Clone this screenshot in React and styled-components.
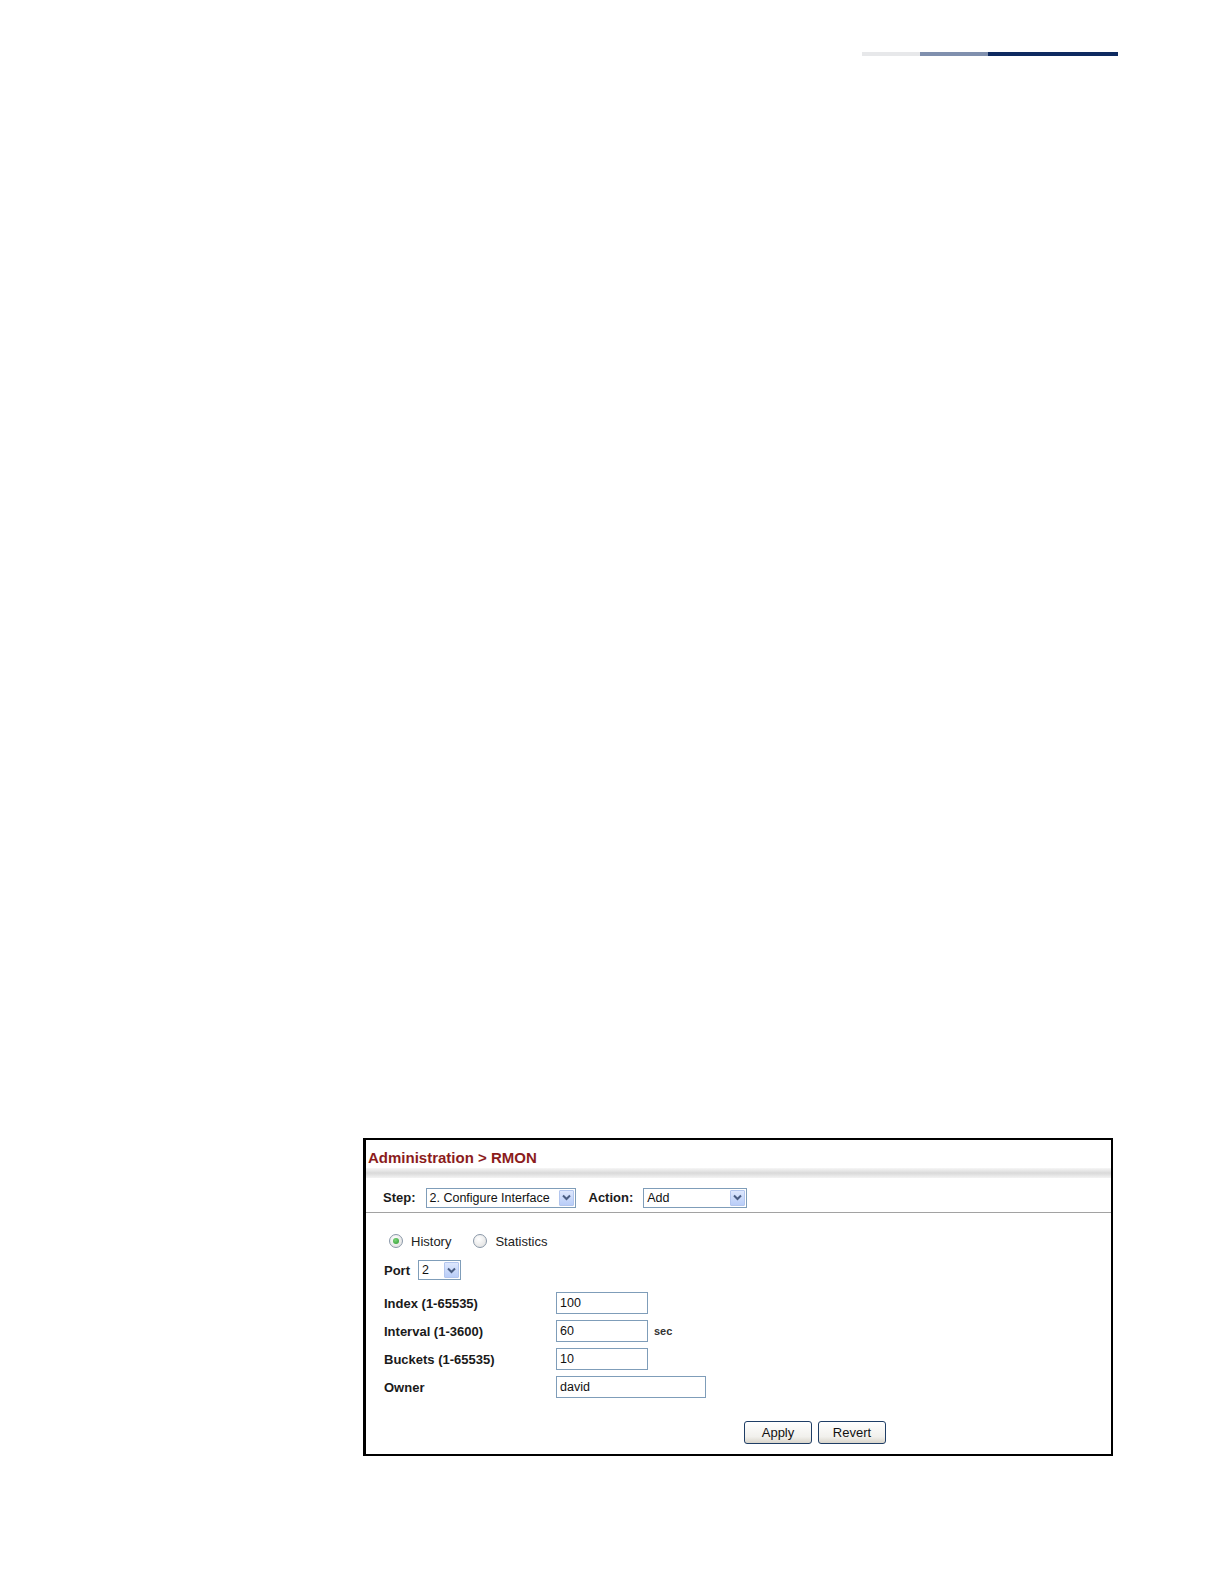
import React from "react"
import styled, { createGlobalStyle } from "styled-components"

const GlobalStyle = createGlobalStyle`
  html, body {
    margin: 0;
    padding: 0;
    background: #fff;
  }
  body {
    font-family: "Liberation Sans", Arial, sans-serif;
  }
`

const Page = styled.div`
  width: 1224px;
  height: 1584px;
  display: flex;
  flex-direction: column;
  overflow: hidden;
`

const TopRule = styled.div`
  display: flex;
  margin: 52px 0 0 862px;
  height: 4px;
`

const RuleSegment = styled.div`
  width: ${p => p.w}px;
  background: ${p => p.color};
`

const Frame = styled.div`
  box-sizing: border-box;
  margin: 1082px 0 0 363px;
  width: 750px;
  height: 318px;
  border: 2px solid #000;
  border-left-width: 3px;
  display: flex;
  flex-direction: column;
`

const Title = styled.h1`
  box-sizing: border-box;
  margin: 0;
  height: 28px;
  padding: 10px 0 0 2px;
  font-size: 15px;
  line-height: 16px;
  font-weight: 700;
  color: #8b1c1c;
`

const Band = styled.div`
  height: 10px;
  background: linear-gradient(#f6f6f6, #d9d9d9 50%, #f3f3f3);
`

const StepBar = styled.div`
  display: flex;
  align-items: center;
  height: 35px;
  padding: 5px 0 0 17px;
  box-sizing: border-box;
  border-bottom: 1px solid #a2a2a2;
`

const BarLabel = styled.span`
  font-size: 13px;
  font-weight: 700;
  color: #1a1a1a;
  margin-right: ${p => p.gap || 10}px;
`

const SelectBox = styled.div`
  box-sizing: border-box;
  display: flex;
  align-items: center;
  justify-content: space-between;
  width: ${p => p.w}px;
  height: 20px;
  border: 1px solid #7f9db9;
  background: #fff;
  padding-left: 3px;
  margin-right: ${p => p.mr || 0}px;
  font-size: 12.5px;
  color: #111;
  white-space: nowrap;
`

const ArrowButton = styled.span`
  box-sizing: border-box;
  display: flex;
  align-items: center;
  justify-content: center;
  width: 15px;
  height: 16px;
  margin-right: 1px;
  border: 1px solid #b3c6ee;
  border-radius: 1px;
  background: linear-gradient(#dde7fd, #b9cdf8);
`

const Content = styled.div`
  display: flex;
  flex-direction: column;
  padding: 20px 0 0 18px;
`

const RadioRow = styled.div`
  display: flex;
  align-items: center;
  height: 16px;
  padding-left: 5px;
  gap: 6px;
`

const RadioCircle = styled.span`
  box-sizing: border-box;
  display: inline-flex;
  align-items: center;
  justify-content: center;
  width: 14px;
  height: 14px;
  border-radius: 50%;
  border: 1px solid #8a98a8;
  background: radial-gradient(circle at 40% 35%, #ffffff, #dcdcdc);
  margin-right: 2px;
`

const RadioDot = styled.span`
  width: 6px;
  height: 6px;
  border-radius: 50%;
  background: radial-gradient(circle at 40% 35%, #7ad47a, #2e9a2e);
`

const RadioText = styled.span`
  font-size: 13px;
  color: #222;
  margin-right: ${p => p.mr || 0}px;
`

const PortRow = styled.div`
  display: flex;
  align-items: center;
  margin-top: 11px;
  height: 20px;
`

const FieldList = styled.div`
  display: flex;
  flex-direction: column;
  gap: 6px;
  margin-top: 12px;
`

const FieldRow = styled.div`
  display: flex;
  align-items: center;
  height: 22px;
`

const FieldLabel = styled.span`
  width: 172px;
  font-size: 13px;
  font-weight: 700;
  color: #1a1a1a;
`

const TextInput = styled.div`
  box-sizing: border-box;
  width: ${p => p.w || 92}px;
  height: 22px;
  border: 1px solid #7f9db9;
  padding: 0 3px;
  font-size: 12.5px;
  line-height: 20px;
  color: #111;
`

const Unit = styled.span`
  margin-left: 6px;
  font-size: 11px;
  font-weight: 700;
  color: #333;
`

const ButtonRow = styled.div`
  display: flex;
  gap: 6px;
  margin: 23px 0 0 360px;
`

const Button = styled.button`
  box-sizing: border-box;
  width: 68px;
  height: 23px;
  border: 1px solid #1f3e66;
  border-radius: 3px;
  background: linear-gradient(#ffffff, #f1f0ec 70%, #d9d5cb);
  font-family: "Liberation Sans", Arial, sans-serif;
  font-size: 13px;
  color: #111;
  padding: 0;
`

const Chevron = () => (
  <svg width="9" height="7" viewBox="0 0 9 7">
    <path d="M1 1.5 L4.5 5 L8 1.5" fill="none" stroke="#4a5d82" strokeWidth="2" />
  </svg>
)

const Select = ({ w, mr, value }) => (
  <SelectBox w={w} mr={mr}>
    <span>{value}</span>
    <ArrowButton>
      <Chevron />
    </ArrowButton>
  </SelectBox>
)

const fields = [
  { label: "Index (1-65535)", value: "100" },
  { label: "Interval (1-3600)", value: "60", unit: "sec" },
  { label: "Buckets (1-65535)", value: "10" },
  { label: "Owner", value: "david", w: 150 },
]

const App = () => (
  <Page>
    <GlobalStyle />
    <TopRule>
      <RuleSegment w={58} color="#e7e8ea" />
      <RuleSegment w={68} color="#8090ae" />
      <RuleSegment w={130} color="#0e2a60" />
    </TopRule>
    <Frame>
      <Title>Administration &gt; RMON</Title>
      <Band />
      <StepBar>
        <BarLabel>Step:</BarLabel>
        <Select w={150} mr={13} value="2. Configure Interface" />
        <BarLabel>Action:</BarLabel>
        <Select w={104} value="Add" />
      </StepBar>
      <Content>
        <RadioRow>
          <RadioCircle>
            <RadioDot />
          </RadioCircle>
          <RadioText mr={16}>History</RadioText>
          <RadioCircle />
          <RadioText>Statistics</RadioText>
        </RadioRow>
        <PortRow>
          <BarLabel gap={8}>Port</BarLabel>
          <Select w={43} value="2" />
        </PortRow>
        <FieldList>
          {fields.map(f => (
            <FieldRow key={f.label}>
              <FieldLabel>{f.label}</FieldLabel>
              <TextInput w={f.w}>{f.value}</TextInput>
              {f.unit && <Unit>{f.unit}</Unit>}
            </FieldRow>
          ))}
        </FieldList>
        <ButtonRow>
          <Button>Apply</Button>
          <Button>Revert</Button>
        </ButtonRow>
      </Content>
    </Frame>
  </Page>
)

export default App
